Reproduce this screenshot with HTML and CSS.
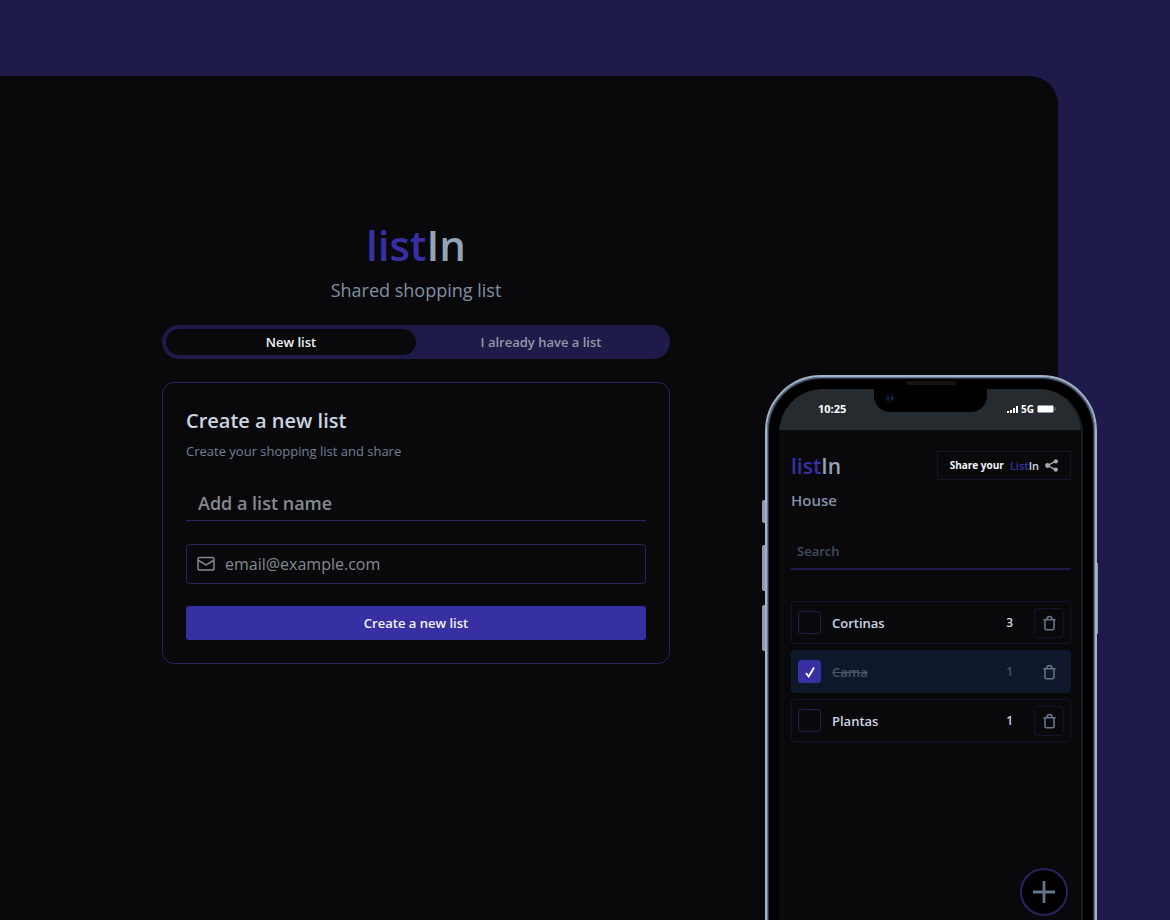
FILE: index.html
```html
<!DOCTYPE html>
<html lang="en">
<head>
<meta charset="utf-8">
<meta name="viewport" content="width=device-width, initial-scale=1">
<title>listIn</title>
<link rel="stylesheet" href="styles.css">
</head>
<body>
<svg class="sprite" aria-hidden="true">
  <symbol id="trash" viewBox="0 0 16 16"><path d="M1.500 4.500h13M3.200 4.500v9q0 1.700 1.500 1.700h6.600q1.500 0 1.500-1.700v-9M5 4.500Q5.300 1 8 1t3 3.500" fill="none" stroke="currentColor" stroke-width="1.700"/></symbol>
</svg>
<div class="page">
  <main class="stage">
    <section class="welcome">
      <h1 class="brand"><span class="brand-accent">list</span>In</h1>
      <p class="tagline">Shared shopping list</p>
      <div class="tabs" role="tablist">
        <button class="tab tab-active" type="button" role="tab" aria-selected="true">New list</button>
        <button class="tab" type="button" role="tab" aria-selected="false">I already have a list</button>
      </div>
      <form class="card">
        <h2 class="card-title">Create a new list</h2>
        <p class="card-text">Create your shopping list and share</p>
        <input class="name-input" type="text" placeholder="Add a list name" aria-label="List name">
        <label class="email">
          <svg class="email-icon" viewBox="0 0 18 16" aria-hidden="true"><rect x="1" y="1.500" width="16" height="12.500" rx="1.800" fill="none" stroke="currentColor" stroke-width="1.500"/><path d="M1.500 4.500 9 9l7.500-4.500" fill="none" stroke="currentColor" stroke-width="1.500"/></svg>
          <input class="email-input" type="email" placeholder="email@example.com" aria-label="Email">
        </label>
        <button class="submit" type="button">Create a new list</button>
      </form>
    </section>
  </main>

  <aside class="phone">
    <span class="side-key key-mute"></span>
    <span class="side-key key-up"></span>
    <span class="side-key key-down"></span>
    <span class="side-key key-power"></span>
    <div class="bezel">
      <span class="speaker"></span>
      <div class="screen">
        <div class="status">
          <span class="clock">10:25</span>
          <span class="signal">
            <svg class="bars" viewBox="0 0 11 8" aria-hidden="true"><path d="M0 6h2v2H0zM3 5h2v3H3zM6 3h2v5H6zM9 1h2v7H9z" fill="currentColor"/></svg>
            5G
            <svg class="battery" viewBox="0 0 19 8" aria-hidden="true"><rect x="0.500" y="0.500" width="16" height="7" rx="1" fill="currentColor"/><path d="M18 2.500v3" stroke="#82868a"/></svg>
          </span>
        </div>
        <div class="notch"><svg class="camera" viewBox="0 0 12 12" aria-hidden="true"><circle cx="6" cy="6" r="5.500" fill="#080a10"/><path d="M4 4.500v3M8 4.500v3M7 7h2" stroke="#253b7c" stroke-width="1.200"/></svg></div>
        <div class="app">
          <header class="app-head">
            <div class="app-brand"><span class="brand-accent">list</span>In</div>
            <button class="share" type="button">Share your <span class="share-brand"><span class="brand-accent">List</span>In</span>
              <svg class="share-icon" viewBox="0 0 12 12" aria-hidden="true"><path d="M10 2 2.500 6 10 10" fill="none" stroke="currentColor" stroke-width="1.300"/><g fill="currentColor"><circle cx="10" cy="2.200" r="2"/><circle cx="2.300" cy="6" r="2.200"/><circle cx="10" cy="9.800" r="2"/></g></svg>
            </button>
          </header>
          <h2 class="list-name">House</h2>
          <input class="search" type="search" placeholder="Search" aria-label="Search">
          <ul class="items">
            <li class="item"><label class="item-label"><input class="check" type="checkbox">Cortinas</label><span class="count">3</span><button class="remove" type="button" aria-label="Delete Cortinas"><svg class="trash"><use href="#trash"/></svg></button></li>
            <li class="item item-done"><label class="item-label"><span class="check-wrap"><input class="check" type="checkbox" checked><svg class="tick" viewBox="0 0 12 12" aria-hidden="true"><path d="M2 7 4.700 10.500 10 1.500" fill="none" stroke="#fff" stroke-width="1.900"/></svg></span><s>Cama</s></label><span class="count">1</span><button class="remove" type="button" aria-label="Delete Cama"><svg class="trash"><use href="#trash"/></svg></button></li>
            <li class="item"><label class="item-label"><input class="check" type="checkbox">Plantas</label><span class="count">1</span><button class="remove" type="button" aria-label="Delete Plantas"><svg class="trash"><use href="#trash"/></svg></button></li>
          </ul>
          <button class="add" type="button" aria-label="Add item"><svg class="plus" viewBox="0 0 22 22" aria-hidden="true"><path d="M11 0v22M0 11h22" stroke="currentColor" stroke-width="2.800"/></svg></button>
        </div>
      </div>
    </div>
  </aside>
</div>
</body>
</html>
```
FILE: styles.css
```css
* { box-sizing: border-box; }
body, h1, h2, p, ul { margin: 0; padding: 0; }
body { background: #1e1b4b; font-family: "Open Sans", "Noto Sans", sans-serif; }
button, input { font: inherit; color: inherit; margin: 0; }
input { min-width: 0; outline: 0; }
.sprite { position: absolute; width: 0; height: 0; }
.page { position: relative; display: flex; min-height: 100vh; padding: 76px 112px 0 0; overflow: hidden; }
.stage { flex: 1; padding: 145px 24px 24px 162px; background: #09090b; border-radius: 0 28px 0 0; }
.welcome { display: flex; flex-direction: column; max-width: 508px; }
.brand { color: #94a3b8; font-size: 42px; line-height: 48px; font-weight: 600; text-align: center; }
.brand-accent { color: #3730a3; }
.tagline { margin: 7px 0 21px; color: #8190a5; font-size: 18px; line-height: 28px; text-align: center; }
.tabs { display: grid; grid-template-columns: 1fr 1fr; padding: 4px; background: #1e1b4b; border-radius: 17px; }
.tab { height: 26px; padding: 0; border: 0; border-radius: 13px; background: none; color: #9896a8; font-size: 13px; line-height: 20px; font-weight: 600; }
.tab-active { background: #09090b; color: #f4f4f5; }
.card { display: flex; flex-direction: column; margin-top: 23px; padding: 22px 23px 23px; border: 1px solid #292461; border-radius: 12px; }
.card-title { color: #cbd5e1; font-size: 20px; line-height: 32px; font-weight: 600; }
.card-text { margin: 4px 0 24px; color: #718096; font-size: 13px; line-height: 20px; }
.name-input { height: 36px; padding: 0 12px; border: 0; border-bottom: 1px solid #292461; background: none; font-size: 18px; font-weight: 600; }
.name-input::placeholder { color: #858990; opacity: 1; }
.email { display: flex; align-items: center; gap: 10px; height: 40px; margin: 23px 0 22px; padding: 0 10px; border: 1px solid #292461; border-radius: 4px; color: #858990; }
.email-icon { flex: none; width: 18px; height: 16px; }
.email-input { flex: 1; padding: 0; border: 0; background: none; font-size: 16px; }
.email-input::placeholder { color: #858990; opacity: 1; }
.submit { height: 34px; padding: 0; border: 0; border-radius: 3px; background: #3730a3; color: #f4f4f5; font-size: 13px; font-weight: 600; }

.phone { position: absolute; top: 375px; right: 73px; bottom: -80px; width: 332px; }
.bezel { position: relative; height: 100%; padding: 12px; border: 2px solid #a3b3c9; border-radius: 56px; background: #000; box-shadow: inset 0 0 0 1px #64748f, inset 0 0 0 2px #2a3444; }
.side-key { position: absolute; left: -3px; width: 4px; background: #8f9bb0; border-radius: 2px 0 0 2px; }
.key-mute { top: 125px; height: 23px; }
.key-up { top: 170px; height: 46px; }
.key-down { top: 230px; height: 46px; }
.key-power { top: 188px; right: -1px; left: auto; height: 71px; width: 3px; }
.speaker { position: absolute; top: 4px; left: 50%; width: 50px; height: 4px; margin-left: -25px; border-radius: 2px; background: #141414; }
.screen { position: relative; display: flex; flex-direction: column; height: 100%; border-right: 2px solid #1c1c1e; border-radius: 44px; background: #09090b; overflow: hidden; }
.status { display: flex; flex: none; align-items: center; justify-content: space-between; height: 41px; padding: 0 25px 2px 39px; background: #262b2f; color: #fff; font-size: 11px; line-height: 16px; font-weight: 700; }
.signal { display: flex; align-items: center; gap: 3px; font-size: 10px; }
.bars { width: 11px; height: 8px; }
.battery { width: 19px; height: 8px; }
.notch { position: absolute; top: 0; left: 95px; width: 113px; height: 23px; padding: 3px 10px; border-radius: 0 0 16px 16px; background: #000; }
.camera { display: block; width: 12px; height: 12px; }
.app { display: flex; flex: 1; flex-direction: column; padding: 20px 10px 70px 12px; color: #cbd5e1; }
.app-head { display: flex; align-items: center; justify-content: space-between; }
.app-brand { padding-top: 2px; color: #94a3b8; font-size: 21px; line-height: 28px; font-weight: 600; }
.share { display: flex; align-items: center; gap: 6px; height: 29px; padding: 0 12px; border: 1px solid #111827; background: none; color: #f1f5f9; font-size: 10px; font-weight: 700; }
.share-brand { font-size: 11px; font-weight: 600; color: #cbd5e1; }
.share-icon { width: 13px; height: 13px; color: #a8a8ac; }
.list-name { margin-top: 8px; color: #8291a6; font-size: 15px; line-height: 24px; font-weight: 600; }
.search { height: 36px; margin-top: 22px; padding: 0 6px; border: 0; border-bottom: 2px solid #1e1b4b; background: none; font-size: 13px; font-weight: 600; }
.search::placeholder { color: #414c60; opacity: 1; }
.items { display: grid; gap: 6px; margin-top: 31px; list-style: none; }
.item { display: flex; align-items: center; height: 43px; padding: 0 6px; border: 1px solid #151230; border-radius: 3px; font-size: 13px; font-weight: 600; }
.item-done { border-color: #0f172a; background: #0f172a; color: #475569; }
.item-label { display: flex; flex: 1; align-items: center; gap: 11px; }
.check-wrap { position: relative; display: flex; }
.check { width: 23px; height: 23px; appearance: none; border: 1px solid #211c51; border-radius: 3px; }
.check:checked { background: #3730a3; border-color: #3730a3; }
.tick { position: absolute; top: 6px; left: 6px; width: 12px; height: 12px; }
.count { margin-right: 21px; font-size: 12px; }
.remove { display: grid; place-items: center; width: 30px; height: 30px; padding: 0; border: 1px solid #151230; border-radius: 4px; background: none; color: #64748b; }
.item-done .remove { border-color: #14163a; }
.trash { width: 15px; height: 16px; }
.add { display: grid; place-items: center; align-self: flex-end; width: 48px; height: 48px; margin: auto 3px 0 0; padding: 0; border: 2px solid #292461; border-radius: 50%; background: #000; color: #64748b; }
.plus { width: 22px; height: 22px; }
```
